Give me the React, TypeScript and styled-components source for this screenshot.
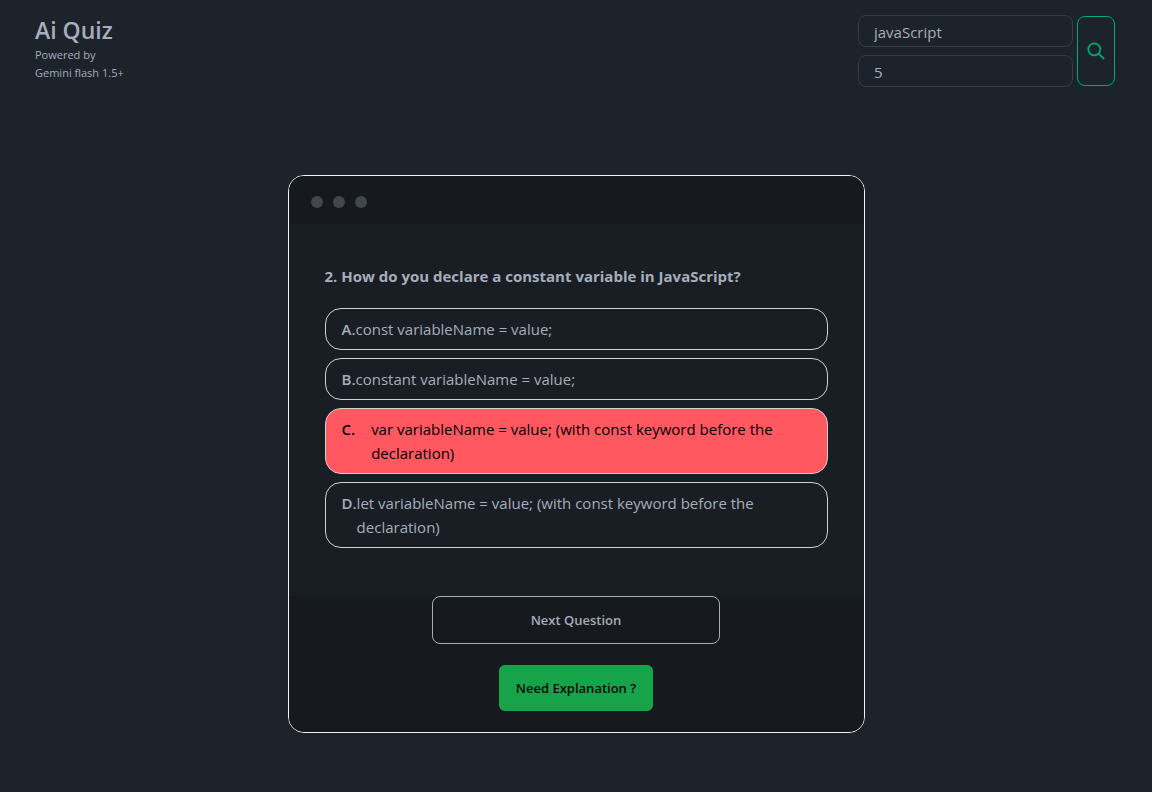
import React, { useState } from "react";
import styled, { createGlobalStyle } from "styled-components";

const GlobalStyle = createGlobalStyle`
  *, *::before, *::after { box-sizing: border-box; }
  body {
    margin: 0;
    background: #1d232a;
    color: #a6adbb;
    font-family: "Segoe UI", "Open Sans", "Noto Sans", sans-serif;
    font-size: 15px;
    line-height: 24px;
  }
  button, input { font: inherit; color: inherit; }
  button { cursor: pointer; }
`;

const Header = styled.header`
  display: flex;
  justify-content: space-between;
  align-items: flex-start;
  padding: 15px 37px 0 35px;
`;

const Title = styled.h1`
  margin: 0;
  font-size: 23px;
  line-height: 31px;
  font-weight: 600;
`;

const Tagline = styled.p`
  margin: 0;
  font-size: 11px;
  line-height: 18px;
`;

const SearchForm = styled.form`
  display: flex;
  align-items: center;
  gap: 4px;
`;

const Fields = styled.div`
  display: flex;
  flex-direction: column;
  gap: 8px;
`;

const Field = styled.input`
  width: 215px;
  height: 32px;
  padding: 2px 15px 0;
  border: 1px solid #373d46;
  border-radius: 8px;
  background: transparent;
  outline: none;
`;

const SearchButton = styled.button`
  display: flex;
  align-items: center;
  justify-content: center;
  width: 38px;
  height: 70px;
  padding: 0;
  border: 1px solid #00a96e;
  border-radius: 8px;
  background: transparent;
  color: #00a96e;
`;

const Card = styled.main`
  width: calc(50% + 1px);
  min-width: 320px;
  margin: 88px auto 58px;
  border: 1px solid #f2f2f2;
  border-radius: 16px;
  background: #191e24;
  overflow: hidden;
`;

const TitleBar = styled.div`
  display: flex;
  align-items: center;
  gap: 10px;
  height: 48px;
  padding: 4px 22px 0;
  background: #16191d;
`;

const Dot = styled.span`
  width: 12px;
  height: 12px;
  border-radius: 50%;
  background: #42464d;
`;

const Body = styled.section`
  padding: 40px 36px 48px;
`;

const Question = styled.h2`
  margin: 0 0 20px;
  font-size: 15px;
  line-height: 24px;
  font-weight: 700;
`;

const Options = styled.div`
  display: flex;
  flex-direction: column;
  gap: 8px;
`;

const Option = styled.button<{ $wrong: boolean }>`
  display: flex;
  align-items: flex-start;
  gap: ${(p) => (p.$wrong ? 16 : 0)}px;
  width: 100%;
  padding: 8px 16px;
  border: 1px solid #d1d1d1;
  border-radius: 16px;
  background: ${(p) => (p.$wrong ? "#ff5861" : "transparent")};
  color: ${(p) => (p.$wrong ? "#000000" : "inherit")};
  text-align: left;
`;

const Letter = styled.span`
  font-weight: 600;
`;

const Footer = styled.footer`
  display: flex;
  flex-direction: column;
  align-items: center;
  gap: 21px;
  padding-bottom: 21px;
  background: #16191d;
`;

const NextButton = styled.button`
  width: 50%;
  height: 48px;
  border: 1px solid #a6adbb;
  border-radius: 8px;
  background: transparent;
  font-size: 13px;
  font-weight: 600;
`;

const ExplainButton = styled.button`
  height: 46px;
  padding: 0 17px;
  border: 0;
  border-radius: 6px;
  background: #16a34a;
  color: #000a04;
  font-size: 13px;
  font-weight: 600;
`;

const SearchIcon = () => (
  <svg width="18" height="18" viewBox="0 0 18 18" fill="none" stroke="currentColor" strokeWidth="1.8" aria-hidden="true">
    <circle cx="7.3" cy="7.3" r="6" />
    <path d="M11.6 11.6L17 17" />
  </svg>
);

const answers = [
  { letter: "A.", text: "const variableName = value;", correct: true },
  { letter: "B.", text: "constant variableName = value;", correct: false },
  { letter: "C.", text: "var variableName = value; (with const keyword before the declaration)", correct: false },
  { letter: "D.", text: "let variableName = value; (with const keyword before the declaration)", correct: false },
];

export default function App() {
  const [topic, setTopic] = useState("javaScript");
  const [count, setCount] = useState("5");
  const [picked, setPicked] = useState("C.");

  return (
    <>
      <GlobalStyle />
      <Header>
        <div>
          <Title>Ai Quiz</Title>
          <Tagline>
            Powered by
            <br />
            Gemini flash 1.5+
          </Tagline>
        </div>
        <SearchForm onSubmit={(e) => e.preventDefault()}>
          <Fields>
            <Field aria-label="Topic" value={topic} onChange={(e) => setTopic(e.target.value)} />
            <Field
              aria-label="Number of questions"
              inputMode="numeric"
              value={count}
              onChange={(e) => setCount(e.target.value)}
            />
          </Fields>
          <SearchButton type="submit" aria-label="Search">
            <SearchIcon />
          </SearchButton>
        </SearchForm>
      </Header>
      <Card>
        <TitleBar>
          <Dot />
          <Dot />
          <Dot />
        </TitleBar>
        <Body>
          <Question>2. How do you declare a constant variable in JavaScript?</Question>
          <Options>
            {answers.map(({ letter, text, correct }) => (
              <Option
                key={letter}
                type="button"
                $wrong={picked === letter && !correct}
                onClick={() => setPicked(letter)}
              >
                <Letter>{letter}</Letter>
                <span>{text}</span>
              </Option>
            ))}
          </Options>
        </Body>
        <Footer>
          <NextButton type="button">Next Question</NextButton>
          <ExplainButton type="button">Need Explanation ?</ExplainButton>
        </Footer>
      </Card>
    </>
  );
}
